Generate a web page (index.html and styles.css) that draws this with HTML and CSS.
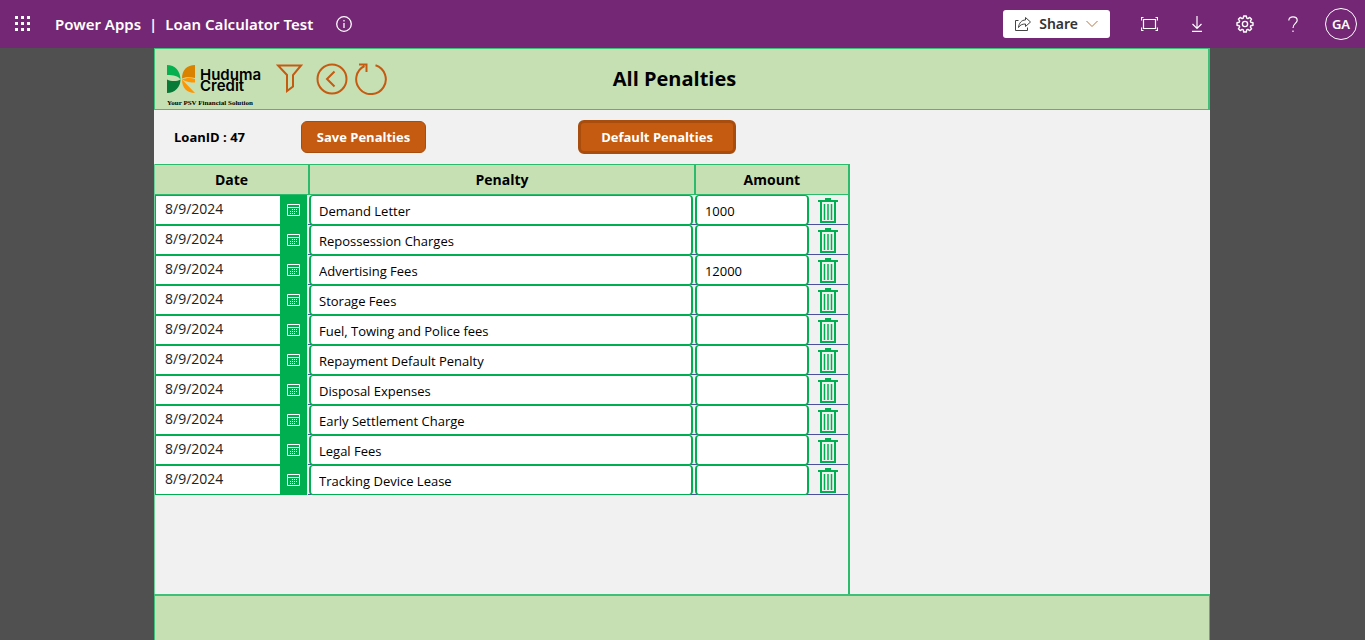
FILE: index.html
```html
<!DOCTYPE html>
<html lang="en">
<head>
<meta charset="utf-8">
<meta name="viewport" content="width=device-width, initial-scale=1">
<title>Loan Calculator Test - Power Apps</title>
<link rel="stylesheet" href="styles.css">
</head>
<body>
<svg class="defs" aria-hidden="true">
  <symbol id="calendar" viewBox="0 0 13 12">
    <path d="M.5 .5h12v11h-12zM.5 3.5h12" fill="none" stroke="currentColor"/>
    <path d="M5 5h1v1H5zM7 5h1v1H7zM9 5h1v1H9zM3 7h1v1H3zM5 7h1v1H5zM7 7h1v1H7zM9 7h1v1H9zM3 9h1v1H3zM5 9h1v1H5zM7 9h1v1H7z" fill="currentColor"/>
  </symbol>
  <symbol id="trash" viewBox="0 0 20 27">
    <path d="M7 1h6v2h7v2H0V3h7z" fill="currentColor"/>
    <path d="M3 5v20h14V5" fill="none" stroke="currentColor" stroke-width="2"/>
    <path d="M6.500 7v16M10 7v16M13.500 7v16" fill="none" stroke="currentColor" stroke-width="1.500"/>
  </symbol>
</svg>
<header class="topbar">
  <button class="icon-button" aria-label="App launcher">
    <svg width="16" height="16" viewBox="0 0 16 16" fill="currentColor"><path d="M0 0h3v3H0zM6 0h3v3H6zM12 0h3v3h-3zM0 6h3v3H0zM6 6h3v3H6zM12 6h3v3h-3zM0 12h3v3H0zM6 12h3v3H6zM12 12h3v3h-3z"/></svg>
  </button>
  <div class="app-name"><a href="#">Power Apps</a><span>|</span><span>Loan Calculator Test</span></div>
  <button class="icon-button info" aria-label="Information">
    <svg width="16" height="16" viewBox="0 0 16 16" fill="none" stroke="currentColor"><circle cx="8" cy="8" r="7.300" stroke-width="1.300"/><path d="M8 7v5M8 4v1.500" stroke-width="1.300"/></svg>
  </button>
  <div class="top-actions">
    <button class="share">
      <svg width="16" height="16" viewBox="0 0 16 16" fill="none" stroke="#444"><path d="M3.500 4.500h-3v10h12v-3"/><path d="M10.500 1.500l5 4.500-5 4.500V8C7 8 5 9 3.500 11.500 4 7 6.500 4 10.500 4z" stroke-linejoin="round"/></svg>
      Share
      <svg width="12" height="8" viewBox="0 0 12 8" fill="none" stroke="#b5744a"><path d="M.5 1L6 6.500 11.500 1"/></svg>
    </button>
    <button class="icon-button" aria-label="Fit to screen"><svg width="17" height="14" viewBox="0 0 17 14" fill="none" stroke="currentColor" stroke-width="1.200"><path d="M2.500 2.500h12v9h-12zM.5 3.500v-3h2M14.500 .5h2v3M.5 10.500v3h2M14.500 13.500h2v-3"/></svg></button>
    <button class="icon-button" aria-label="Download"><svg width="12" height="16" viewBox="0 0 12 16" fill="none" stroke="currentColor" stroke-width="1.200"><path d="M6 0v12.500M1.500 8L6 12.500 10.500 8M1 15.400h10"/></svg></button>
    <button class="icon-button" aria-label="Settings"><svg width="18" height="18" viewBox="0 0 18 18" fill="none" stroke="currentColor" stroke-width="1.400" stroke-linejoin="round"><path d="M7.700 1h2.600l.4 2.200 1.200.5 1.900-1.300 1.800 1.800-1.300 1.900.5 1.200 2.200.4v2.600l-2.200.4-.5 1.200 1.300 1.900-1.800 1.800-1.900-1.300-1.200.5-.4 2.200H7.700l-.4-2.200-1.200-.5-1.900 1.300-1.800-1.800 1.300-1.900-.5-1.200L1 10.300V7.700l2.200-.4.500-1.200-1.300-1.900 1.800-1.800 1.900 1.300 1.200-.5z"/><circle cx="9" cy="9" r="2.600"/></svg></button>
    <button class="icon-button" aria-label="Help"><svg width="10" height="17" viewBox="0 0 10 17" fill="none" stroke="currentColor" stroke-width="1.200"><path d="M.8 4.500C.8 2 2.500.8 5 .8s4.200 1.300 4.200 3.500C9.200 7.500 5 7.500 5 12M5 14.500V16"/></svg></button>
    <button class="avatar" aria-label="Account GA">GA</button>
  </div>
</header>
<div class="stage">
<main class="app">
  <header class="app-header">
    <div class="logo">
      <div class="logo-top">
        <svg width="29" height="29" viewBox="0 0 29 29"><path d="M0 0C8 0 13.500 6 13.500 14.500 11 11 7 10 0 10z" fill="#07b04f"/><path d="M0 28C8 28 13.500 22 13.500 14.500 10 16.500 4 16.500 0 14.500z" fill="#067a36"/><path d="M28 0C20 0 15 5 15 13.500 19 11.500 24 12 28 13z" fill="#d98200"/><path d="M28 28C20 28 15 23 15 14.500 19 17 24 17.500 28 17.500V14C24 12.500 19 12.500 15 14.500z" fill="#ff9500"/></svg>
        <div class="logo-name">Huduma<br>Credit</div>
      </div>
      <div class="tagline">Your PSV Financial Solution</div>
    </div>
    <div class="header-tools">
      <button class="filter" aria-label="Filter"><svg width="27" height="30" viewBox="0 0 27 30"><path d="M2 1.500h23l-8 9.500V22.500l-6 4.500V11z"/></svg></button>
      <button aria-label="Back"><svg width="32" height="32" viewBox="0 0 32 32"><circle cx="16" cy="16" r="14.500"/><path d="M18.500 8.500L11 16l7.500 7.500"/></svg></button>
      <button aria-label="Reload"><svg width="32" height="32" viewBox="0 0 32 32"><path d="M20.500 2.200A14.800 14.800 0 1 1 9.500 3M4 1.500h7.500V9"/></svg></button>
    </div>
    <h1>All Penalties</h1>
  </header>
  <div class="toolbar">
    <span class="loan-id">LoanID : 47</span>
    <button class="action save">Save Penalties</button>
    <button class="action default">Default Penalties</button>
  </div>
  <section class="penalties">
    <table>
      <colgroup><col class="col-date"><col><col class="col-amount"><col class="col-delete"></colgroup>
      <thead><tr><th scope="col">Date</th><th scope="col">Penalty</th><th scope="col" colspan="2">Amount</th></tr></thead>
      <tbody id="rows"></tbody>
    </table>
  </section>
  <footer class="app-footer"></footer>
</main>
</div>
<script src="script.js"></script>
</body>
</html>
```
FILE: styles.css
```css
* { box-sizing: border-box; }
body {
  margin: 0;
  min-height: 100vh;
  display: flex;
  flex-direction: column;
  background: #505050;
  color: #000;
  font: 13px/18px "Open Sans", sans-serif;
}
button { font: inherit; color: inherit; background: none; border: 0; padding: 0; cursor: pointer; }
svg { display: block; flex-shrink: 0; }
.defs { display: none; }

.topbar {
  height: 48px;
  display: flex;
  align-items: center;
  padding: 0 8px 0 7px;
  background: #742774;
  color: #fff;
}
.icon-button { width: 32px; height: 32px; display: grid; place-items: center; }
.app-name { display: flex; gap: 8px; margin-left: 16px; font: 600 15px/20px "Noto Sans", sans-serif; }
.app-name a { color: inherit; text-decoration: none; }
.info { margin-left: 15px; }
.top-actions { display: flex; align-items: center; gap: 16px; margin-left: auto; }
.share {
  height: 28px;
  display: flex;
  align-items: center;
  gap: 8px;
  padding: 0 12px;
  margin-right: 7px;
  background: #fff;
  border-radius: 3px;
  color: #333;
  font: 600 14px/20px "Noto Sans", sans-serif;
}
.avatar {
  width: 32px;
  height: 32px;
  border: 1px solid #fff;
  border-radius: 50%;
  font: 600 13px/20px "Noto Sans", sans-serif;
}

.stage { flex: 1; display: flex; padding: 0 155px 0 154px; }
.app { flex: 1; display: flex; flex-direction: column; background: #f1f1f1; }
.app-header {
  height: 62px;
  display: grid;
  grid-template-columns: 104px auto 1fr;
  border: 1px solid #3fc079;
  border-right-width: 2px;
  background: #c6e0b4;
}
.logo { padding: 16px 0 0 12px; }
.logo-top { display: flex; gap: 4px; }
.logo-name { padding-top: 4px; font: 600 15px/11px Inter, sans-serif; }
.tagline { margin-top: 4px; font: 700 7px/10px "Liberation Serif", serif; white-space: nowrap; }
.header-tools { display: flex; align-items: center; gap: 7px; padding-left: 17px; }
.header-tools svg { fill: none; stroke: #c55a11; stroke-width: 2; }
.filter { width: 33px; }
h1 { margin: 0; padding-right: 246px; align-self: center; text-align: center; font-size: 20px; line-height: 28px; }

.toolbar { height: 54px; display: flex; align-items: center; padding-left: 20px; font-weight: 700; }
.loan-id { width: 127px; }
.action { background: #c55a11; color: #fff; border: 1px solid #a84d0e; border-radius: 6px; font-weight: 700; }
.save { width: 125px; height: 32px; }
.default { width: 158px; height: 34px; border-width: 3px; margin-left: 152px; }

.penalties { flex: 1; width: 65.9%; border-left: 1px solid #6bcf97; border-right: 2px solid #2bbb6a; }
table { width: 100%; table-layout: fixed; border-collapse: separate; border-spacing: 0; }
.col-date { width: 153px; }
.col-amount { width: 115px; }
.col-delete { width: 39px; }
th {
  height: 31px;
  padding: 0;
  background: #c6e0b4;
  border: solid #2bbb6a;
  border-width: 1px 0;
  font-size: 14px;
  line-height: 18px;
}
th + th { border-left: 2px solid #2bbb6a; }
td { height: 30px; padding: 0; border-bottom: 1px solid #4b4f9c; }
tbody td:first-child { border-bottom: 0; }
.date { height: 30px; margin-right: 1px; display: flex; border: 1px solid #00b050; background: #fff; }
.date input { flex: 1; min-width: 0; padding: 0 0 3px 9px; border: 0; background: none; color: #222; font: 14px/18px "Open Sans", sans-serif; }
.date button { width: 26px; display: grid; place-items: center; background: #00b050; color: #fff; }
.field {
  display: block;
  height: 30px;
  width: calc(100% - 2px);
  margin: 0 0 -1px 1px;
  padding: 2px 8px 0;
  border: 1px solid #00b050;
  border-left-width: 2px;
  border-right-width: 2px;
  border-radius: 4px;
  background: #fff;
  color: #000;
  font: 13px/18px "Open Sans", sans-serif;
}
.amount { width: calc(100% - 1px); }
.delete { display: block; margin-left: 9px; padding-top: 1px; color: #00b050; }
.app-footer { height: 46px; background: #c6e0b4; border: 1px solid #3fc079; border-width: 2px 1px 0; }
```
FILE: script.js
```js
const penalties = [
  ["Demand Letter", "1000"],
  ["Repossession Charges", ""],
  ["Advertising Fees", "12000"],
  ["Storage Fees", ""],
  ["Fuel, Towing and Police fees", ""],
  ["Repayment Default Penalty", ""],
  ["Disposal Expenses", ""],
  ["Early Settlement Charge", ""],
  ["Legal Fees", ""],
  ["Tracking Device Lease", ""]
];
document.getElementById("rows").innerHTML = penalties.map(([name, amount]) => `
  <tr>
    <td><div class="date"><input aria-label="Date of ${name}" value="8/9/2024"><button aria-label="Pick date"><svg width="13" height="12"><use href="#calendar"/></svg></button></div></td>
    <td><input class="field" aria-label="Penalty" value="${name}"></td>
    <td><input class="field amount" aria-label="Amount of ${name}" value="${amount}"></td>
    <td><button class="delete" aria-label="Delete ${name}"><svg width="20" height="27"><use href="#trash"/></svg></button></td>
  </tr>`).join("");
```
